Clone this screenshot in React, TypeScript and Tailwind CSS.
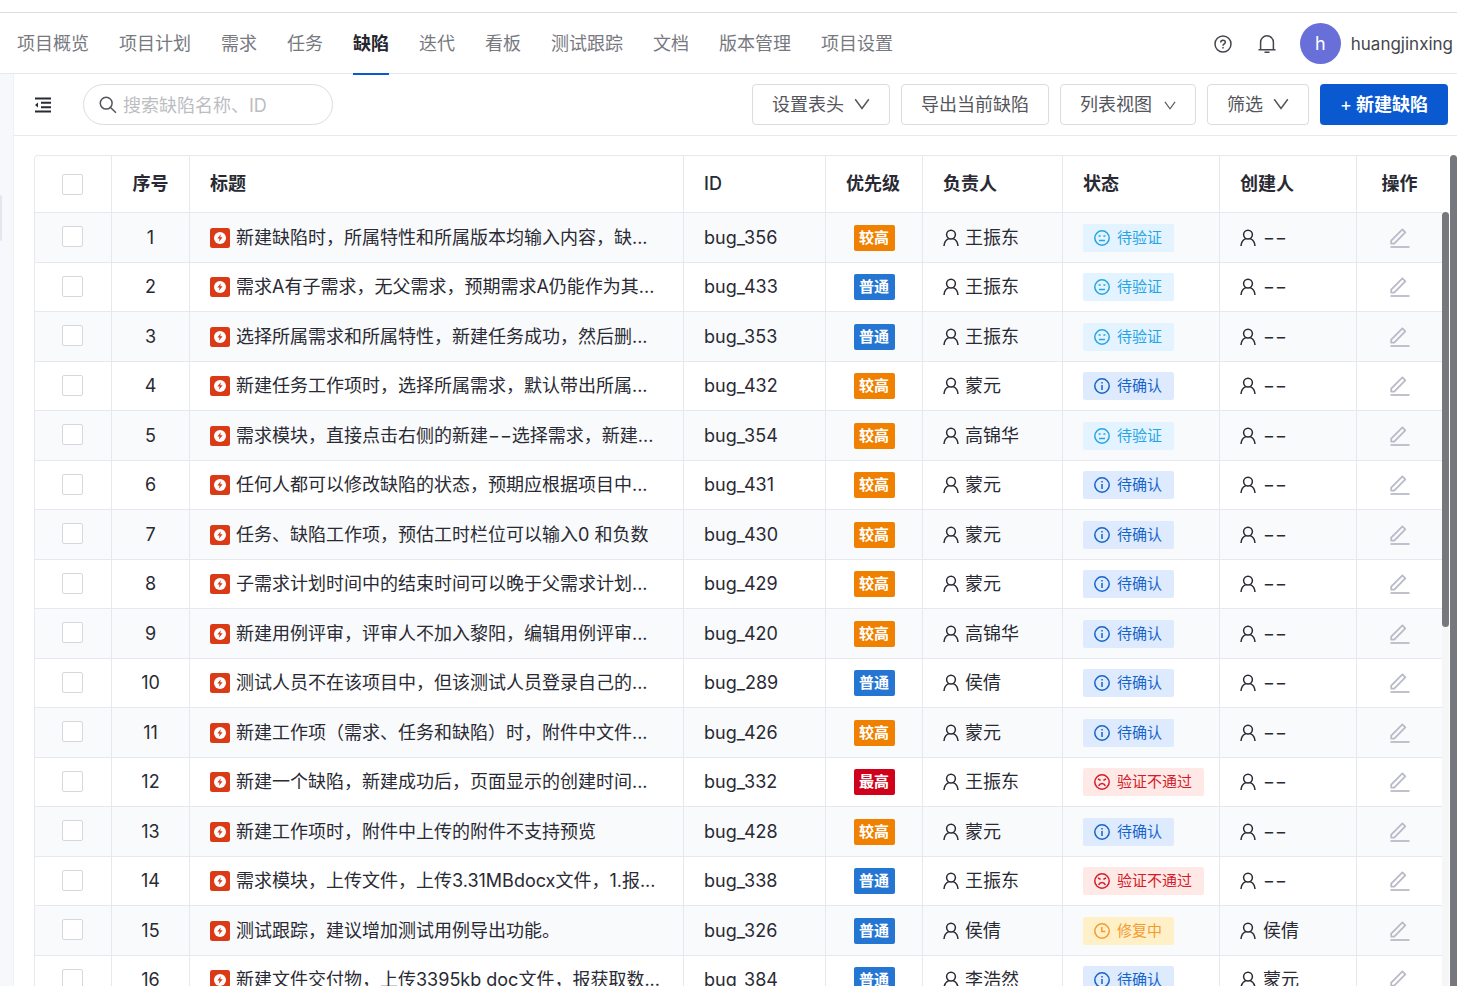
import { useState } from 'react'

type Priority = 'high' | 'normal' | 'highest'
type Status = 'verify' | 'confirm' | 'failed' | 'fixing'

type BugRow = {
  id: string
  title: string
  priority: Priority
  owner: string
  status: Status
  creator: string
}

const NAV_ITEMS = ['项目概览', '项目计划', '需求', '任务', '缺陷', '迭代', '看板', '测试跟踪', '文档', '版本管理', '项目设置']
const ACTIVE_NAV = '缺陷'

const PRIORITY: Record<Priority, { label: string; className: string }> = {
  high: { label: '较高', className: 'bg-[#f08000]' },
  normal: { label: '普通', className: 'bg-[#2476d2]' },
  highest: { label: '最高', className: 'bg-[#d0021b]' },
}

const STATUS: Record<Status, { label: string; className: string }> = {
  verify: { label: '待验证', className: 'bg-[#e3f3ff] text-[#26a5e4]' },
  confirm: { label: '待确认', className: 'bg-[#deebff] text-[#1664c8]' },
  failed: { label: '验证不通过', className: 'bg-[#ffe9e6] text-[#d31c2c]' },
  fixing: { label: '修复中', className: 'bg-[#fff0c8] text-[#f59a2f]' },
}

const NO_CREATOR = '−−'

const ROWS: BugRow[] = [
  { id: 'bug_356', title: '新建缺陷时，所属特性和所属版本均输入内容，缺...', priority: 'high', owner: '王振东', status: 'verify', creator: NO_CREATOR },
  { id: 'bug_433', title: '需求A有子需求，无父需求，预期需求A仍能作为其...', priority: 'normal', owner: '王振东', status: 'verify', creator: NO_CREATOR },
  { id: 'bug_353', title: '选择所属需求和所属特性，新建任务成功，然后删...', priority: 'normal', owner: '王振东', status: 'verify', creator: NO_CREATOR },
  { id: 'bug_432', title: '新建任务工作项时，选择所属需求，默认带出所属...', priority: 'high', owner: '蒙元', status: 'confirm', creator: NO_CREATOR },
  { id: 'bug_354', title: '需求模块，直接点击右侧的新建−−选择需求，新建...', priority: 'high', owner: '高锦华', status: 'verify', creator: NO_CREATOR },
  { id: 'bug_431', title: '任何人都可以修改缺陷的状态，预期应根据项目中...', priority: 'high', owner: '蒙元', status: 'confirm', creator: NO_CREATOR },
  { id: 'bug_430', title: '任务、缺陷工作项，预估工时栏位可以输入0 和负数', priority: 'high', owner: '蒙元', status: 'confirm', creator: NO_CREATOR },
  { id: 'bug_429', title: '子需求计划时间中的结束时间可以晚于父需求计划...', priority: 'high', owner: '蒙元', status: 'confirm', creator: NO_CREATOR },
  { id: 'bug_420', title: '新建用例评审，评审人不加入黎阳，编辑用例评审...', priority: 'high', owner: '高锦华', status: 'confirm', creator: NO_CREATOR },
  { id: 'bug_289', title: '测试人员不在该项目中，但该测试人员登录自己的...', priority: 'normal', owner: '侯倩', status: 'confirm', creator: NO_CREATOR },
  { id: 'bug_426', title: '新建工作项（需求、任务和缺陷）时，附件中文件...', priority: 'high', owner: '蒙元', status: 'confirm', creator: NO_CREATOR },
  { id: 'bug_332', title: '新建一个缺陷，新建成功后，页面显示的创建时间...', priority: 'highest', owner: '王振东', status: 'failed', creator: NO_CREATOR },
  { id: 'bug_428', title: '新建工作项时，附件中上传的附件不支持预览', priority: 'high', owner: '蒙元', status: 'confirm', creator: NO_CREATOR },
  { id: 'bug_338', title: '需求模块，上传文件，上传3.31MBdocx文件，1.报...', priority: 'normal', owner: '王振东', status: 'failed', creator: NO_CREATOR },
  { id: 'bug_326', title: '测试跟踪，建议增加测试用例导出功能。', priority: 'normal', owner: '侯倩', status: 'fixing', creator: '侯倩' },
  { id: 'bug_384', title: '新建文件交付物，上传3395kb doc文件，报获取数...', priority: 'normal', owner: '李浩然', status: 'confirm', creator: '蒙元' },
]

function PersonIcon() {
  return (
    <svg viewBox="0 0 16 18" className="h-[18px] w-4 shrink-0" fill="none" stroke="currentColor" strokeWidth="1.5">
      <circle cx="8" cy="5.6" r="4.4" />
      <path d="M1 17c.2-3.6 2-6.2 4.8-7.4M15 17c-.2-3.6-2-6.2-4.8-7.4" />
    </svg>
  )
}

function BugIcon() {
  return (
    <svg viewBox="0 0 20 20" className="h-5 w-5 shrink-0">
      <rect width="20" height="20" rx="2.5" fill="#da3a16" />
      <circle cx="10" cy="10" r="6" fill="#fff" />
      <path d="M10.8 6.2L7.3 10.6h2.2l-.5 3.2 3.6-4.5h-2.3z" fill="#da3a16" />
    </svg>
  )
}

function EditIcon() {
  return (
    <svg viewBox="0 0 20 20" className="h-5 w-5" fill="none" stroke="currentColor" strokeWidth="1.8">
      <path d="M1.2 15.6v-3L12.4 1.4l2.9 2.9L4.2 15.6z" strokeLinejoin="round" />
      <path d="M.5 19h19" />
    </svg>
  )
}

function StatusIcon({ status }: { status: Status }) {
  return (
    <svg viewBox="0 0 16 16" className="h-4 w-4 shrink-0" fill="none" stroke="currentColor" strokeWidth="1.5">
      <circle cx="8" cy="8" r="7.2" />
      {status === 'verify' && <path d="M4.6 6h2M9.4 6h2M5 10.5h6" />}
      {status === 'confirm' && <path d="M8 3.9v1.5M8 6.9v5.2" />}
      {status === 'failed' && <path d="M4 5l2.6 1.4M12 5L9.4 6.4M4.6 11.8c1.6-3.2 5.2-3.2 6.8 0" />}
      {status === 'fixing' && <path d="M7.8 4v4.5h3.7" />}
    </svg>
  )
}

function Chevron({ small = false }: { small?: boolean }) {
  return (
    <svg viewBox="0 0 16 12" className={small ? 'h-[9px] w-3' : 'mb-0.5 h-3 w-4'} fill="none" stroke="currentColor" strokeWidth="1.5">
      <path d="M1.2 1.2L8 10.4l6.8-9.2" />
    </svg>
  )
}

const TOOL_BUTTON = 'flex h-[41px] items-center rounded border border-[#dcdcdc] bg-white px-[19px] pt-px text-[#55565c]'
const CHECKBOX = 'mx-auto block h-[21px] w-[21px] appearance-none rounded-xs border border-[#d7d8de] bg-white checked:bg-[#0a59d0]'
const CELL = 'border-r border-b border-[#e6e7ef]'
const TH = `${CELL} px-5 text-left font-bold`
const TD = `${CELL} px-5`

export default function App() {
  const [keyword, setKeyword] = useState('')
  const [selected, setSelected] = useState<string[]>([])

  const toggle = (id: string) => {
    setSelected((prev) => (prev.includes(id) ? prev.filter((x) => x !== id) : [...prev, id]))
  }

  const toggleAll = () => {
    setSelected((prev) => (prev.length === ROWS.length ? [] : ROWS.map((r) => r.id)))
  }

  return (
    <div className="flex h-screen flex-col overflow-hidden bg-white pt-3 font-['Inter','Noto_Sans_CJK_SC',sans-serif] text-lg leading-6 text-[#292a33]">
      <header className="flex h-[62px] shrink-0 items-stretch justify-between border-t border-b border-t-[#dedede] border-b-[#e6e7ef] pr-1 pl-[17px]">
        <nav className="flex gap-[30px]">
          {NAV_ITEMS.map((item) => (
            <a
              key={item}
              href="#"
              className={`-mb-0.5 flex items-center border-b-2 pt-0.5 whitespace-nowrap ${
                item === ACTIVE_NAV ? 'border-[#0a59d0] font-bold text-[#25262e]' : 'border-transparent text-[#77797f]'
              }`}
            >
              {item}
            </a>
          ))}
        </nav>
        <div className="flex items-center pt-px text-[#45464d]">
          <button type="button" aria-label="帮助" className="mr-[26px]">
            <svg viewBox="0 0 18 18" className="h-[18px] w-[18px]" fill="none" stroke="currentColor" strokeWidth="1.5">
              <circle cx="9" cy="9" r="8" />
              <path d="M6.7 7.4c0-3 4.6-2.9 4.6-.2 0 1.7-2.3 1.7-2.3 3.5M9 12v1.5" />
            </svg>
          </button>
          <button type="button" aria-label="通知" className="mr-6">
            <svg viewBox="0 0 18 18" className="h-[18px] w-[18px]" fill="none" stroke="currentColor" strokeWidth="1.5">
              <path d="M2.600 14.500V7.200a6.400 6.400 0 0112.800 0v7.300M.5 14.700h17M6.500 17.200h5" />
            </svg>
          </button>
          <span className="mr-2.5 flex h-[41px] w-[41px] items-center justify-center rounded-full bg-[#686fd8] text-white">h</span>
          <span className="text-[17px]">huangjinxing</span>
        </div>
      </header>

      <div className="flex min-h-0 flex-1">
        <aside className="w-3.5 shrink-0 border-r border-[#f0f1f6] bg-[#f7f8fb] pt-[121px]">
          <div className="h-[46px] w-0.5 rounded-r bg-[#e4e5f0]" />
        </aside>

        <main className="flex min-w-0 flex-1 flex-col">
          <div className="flex h-[62px] shrink-0 items-center border-b border-[#e6e7ef] pr-[9px] pl-5">
            <button type="button" aria-label="收起侧栏" className="mr-[31px]">
              <svg viewBox="0 0 18 16" className="h-4 w-[18px]" fill="none" stroke="currentColor" strokeWidth="2">
                <path d="M1 1.5h16M7 5.8h10M7 10.2h10M1 14.5h16" />
                <path d="M1 8l3-2.5v5z" fill="currentColor" stroke="none" />
              </svg>
            </button>
            <label className="flex h-[41px] w-[250px] items-center gap-1.5 rounded-full border border-[#dcdcdc] px-[15px]">
              <svg viewBox="0 0 18 18" className="h-[18px] w-[18px] shrink-0 text-[#55565c]" fill="none" stroke="currentColor" strokeWidth="1.5">
                <circle cx="7.2" cy="7.2" r="5.9" />
                <path d="M11.5 11.5l5.5 5.3" />
              </svg>
              <input
                type="text"
                aria-label="搜索缺陷"
                value={keyword}
                onChange={(e) => setKeyword(e.target.value)}
                placeholder="搜索缺陷名称、ID"
                className="min-w-0 flex-1 pt-0.5 outline-none placeholder:text-[#bcbdc2]"
              />
            </label>
            <div className="ml-auto flex gap-[11px] whitespace-nowrap">
              <button type="button" className={`${TOOL_BUTTON} gap-2.5`}>
                设置表头 <Chevron />
              </button>
              <button type="button" className={TOOL_BUTTON}>
                导出当前缺陷
              </button>
              <button type="button" className={`${TOOL_BUTTON} gap-3`}>
                列表视图 <Chevron small />
              </button>
              <button type="button" className={`${TOOL_BUTTON} gap-2.5`}>
                筛选 <Chevron />
              </button>
              <button type="button" className="flex h-[41px] items-center gap-1 rounded bg-[#0a59d0] px-5 pt-px font-bold text-white">
                <span className="font-normal">+</span>新建缺陷
              </button>
            </div>
          </div>

          <div className="flex min-h-0 flex-1 overflow-hidden pt-[19px] pl-5">
            <div className="flex min-w-0 flex-1 self-start rounded-tl border-t border-l border-[#e9e9ed]">
              <table className="w-full table-fixed border-separate border-spacing-0">
                <colgroup>
                  <col className="w-[77px]" />
                  <col className="w-[78px]" />
                  <col />
                  <col className="w-[142px]" />
                  <col className="w-[97px]" />
                  <col className="w-[140px]" />
                  <col className="w-[157px]" />
                  <col className="w-[137px]" />
                  <col className="w-[85px]" />
                </colgroup>
                <thead>
                  <tr className="h-[57px]">
                    <th className={`${CELL} pr-0.5`}>
                      <input
                        type="checkbox"
                        aria-label="全选"
                        checked={selected.length === ROWS.length}
                        onChange={toggleAll}
                        className={CHECKBOX}
                      />
                    </th>
                    <th className={`${CELL} font-bold`}>序号</th>
                    <th className={TH}>标题</th>
                    <th className={`${CELL} px-5 text-left font-medium`}>ID</th>
                    <th className={TH}>优先级</th>
                    <th className={TH}>负责人</th>
                    <th className={TH}>状态</th>
                    <th className={TH}>创建人</th>
                    <th className="border-b border-[#e6e7ef] font-bold">操作</th>
                  </tr>
                </thead>
                <tbody>
                  {ROWS.map((row, i) => (
                    <tr key={row.id} className="odd:h-[50px] odd:bg-[#f9fafc] even:h-[49px]">
                      <td className={`${CELL} pr-0.5 pb-0.5`}>
                        <input
                          type="checkbox"
                          aria-label={row.id}
                          checked={selected.includes(row.id)}
                          onChange={() => toggle(row.id)}
                          className={CHECKBOX}
                        />
                      </td>
                      <td className={`${CELL} text-center`}>{i + 1}</td>
                      <td className={TD}>
                        <a href="#" className="flex items-center gap-1.5 whitespace-nowrap">
                          <BugIcon />
                          <span>{row.title}</span>
                        </a>
                      </td>
                      <td className={TD}>{row.id}</td>
                      <td className={CELL}>
                        <span
                          className={`mx-auto block h-[26px] w-[41px] rounded-xs text-center text-[15px] leading-[26px] font-bold text-white ${PRIORITY[row.priority].className}`}
                        >
                          {PRIORITY[row.priority].label}
                        </span>
                      </td>
                      <td className={TD}>
                        <span className="flex items-center gap-1.5">
                          <PersonIcon />
                          {row.owner}
                        </span>
                      </td>
                      <td className={TD}>
                        <span
                          className={`inline-flex h-7 items-center gap-[7px] rounded-xs pr-3 pl-[11px] align-middle text-[15px] whitespace-nowrap ${STATUS[row.status].className}`}
                        >
                          <StatusIcon status={row.status} />
                          {STATUS[row.status].label}
                        </span>
                      </td>
                      <td className={TD}>
                        <span className="flex items-center gap-[7px]">
                          <PersonIcon />
                          {row.creator}
                        </span>
                      </td>
                      <td className="border-b border-[#e6e7ef] text-center">
                        <button type="button" aria-label={`编辑 ${row.id}`} className="block mx-auto text-[#b9bac8]">
                          <EditIcon />
                        </button>
                      </td>
                    </tr>
                  ))}
                </tbody>
              </table>
              <div className="w-[7px] shrink-0 bg-linear-to-b from-white from-[56px] to-[#f6f6f7] to-[56px] pt-14">
                <div className="h-[415px] rounded bg-[#77787d]" />
              </div>
            </div>
            <div className="ml-px w-[7px] shrink-0 rounded-t bg-[#77787d]" />
          </div>
        </main>
      </div>
    </div>
  )
}
